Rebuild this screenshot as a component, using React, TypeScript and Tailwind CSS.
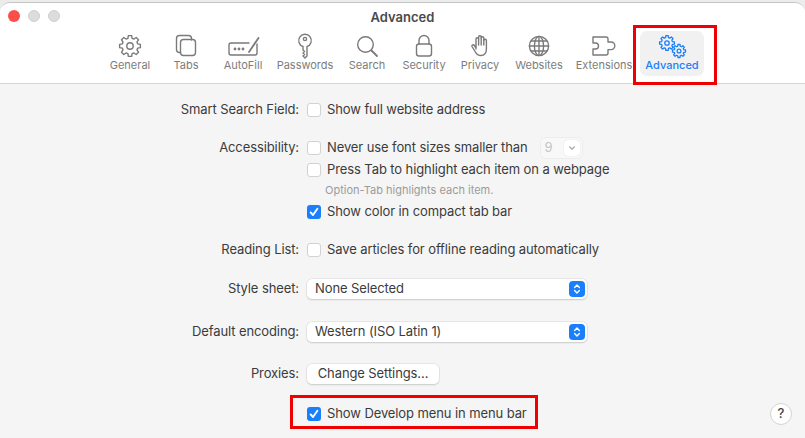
import React from "react";

const GRAY = "#7a7a7a";
const BLUE = "#1a7ffb";

function gearPath(cx: number, cy: number, rOut: number, rIn: number, teeth: number) {
  const pts: string[] = [];
  const step = (Math.PI * 2) / teeth;
  for (let i = 0; i < teeth; i++) {
    const a = i * step - Math.PI / 2;
    const list: [number, number][] = [
      [rIn, a - step * 0.34],
      [rOut, a - step * 0.2],
      [rOut, a + step * 0.2],
      [rIn, a + step * 0.34],
    ];
    list.forEach(([r, t]) => {
      pts.push(`${(cx + r * Math.cos(t)).toFixed(2)} ${(cy + r * Math.sin(t)).toFixed(2)}`);
    });
  }
  return "M" + pts.join("L") + "Z";
}

function Svg({ children, color = GRAY }: { children: React.ReactNode; color?: string }) {
  return (
    <svg width="36" height="26" viewBox="0 0 36 26" fill="none" stroke={color} strokeWidth="1.4" strokeLinecap="round" strokeLinejoin="round">
      {children}
    </svg>
  );
}

const icons: Record<string, React.ReactNode> = {
  General: (
    <Svg>
      <path d={gearPath(18, 13, 10.5, 8, 8)} />
      <circle cx="18" cy="13" r="3.2" />
    </Svg>
  ),
  Tabs: (
    <Svg>
      <path d="M12.5 19.5 h-1 a3 3 0 0 1 -3 -3 v-11 a3 3 0 0 1 3 -3 h9 a3 3 0 0 1 3 3 v1.5" />
      <rect x="12.5" y="6.5" width="15" height="16" rx="3" />
    </Svg>
  ),
  AutoFill: (
    <Svg>
      <path d="M24 10 H6 a2 2 0 0 0 -2 2 v8 a2 2 0 0 0 2 2 h24 a2 2 0 0 0 2 -2 v-9" />
      <path d="M24 19 L33.5 5" strokeWidth="1.8" />
      <circle cx="10" cy="16" r="0.7" fill={GRAY} />
      <circle cx="14" cy="16" r="0.7" fill={GRAY} />
      <circle cx="18" cy="16" r="0.7" fill={GRAY} />
    </Svg>
  ),
  Passwords: (
    <Svg>
      <path d="M16 13.5 a6.3 6.3 0 1 1 4 0 V23 l-2 2 l-2 -2 l1.5 -1.5 l-1.5 -1.5 l1.5 -1.5 l-1.5 -1.5 Z" />
      <circle cx="18" cy="6" r="1.6" />
    </Svg>
  ),
  Search: (
    <Svg>
      <circle cx="16.5" cy="11.5" r="7.8" />
      <path d="M22.5 17.5 L28 23" strokeWidth="1.8" />
    </Svg>
  ),
  Security: (
    <Svg>
      <rect x="10.5" y="11" width="15" height="12" rx="2.5" />
      <path d="M13 11 V7.5 a5 5 0 0 1 10 0 V11" />
    </Svg>
  ),
  Privacy: (
    <Svg>
      <path d="M14 16 V6 a1.3 1.3 0 0 1 2.6 0 V4 a1.3 1.3 0 0 1 2.6 0 V5 a1.3 1.3 0 0 1 2.6 0 V7.5 a1.3 1.3 0 0 1 2.6 0 V16 c0 4 -2 6.5 -5.5 6.5 c-3 0 -4.5 -1.5 -5.5 -3.5 L10 13.5 c-0.6 -1.5 1.4 -2.5 2.4 -1 L14 15" />
      <path d="M16.6 6 V12 M19.2 5 V12 M21.8 7 V12" />
    </Svg>
  ),
  Websites: (
    <Svg>
      <circle cx="18" cy="13" r="9.6" />
      <ellipse cx="18" cy="13" rx="4.6" ry="9.6" />
      <path d="M18 3.4 V22.6 M8.4 13 H27.6 M10 8 H26 M10 18 H26" />
    </Svg>
  ),
  Extensions: (
    <Svg>
      <path d="M7 4 H20 a2 2 0 0 1 2 2 V9 H25 a3.8 3.8 0 0 1 0 7.6 H22 V20 a2 2 0 0 1 -2 2 H7 V16 H9.5 a3 3 0 0 0 0 -6 H7 Z" />
    </Svg>
  ),
  Advanced: (
    <svg width="36" height="26" viewBox="0 0 36 26" fill="none" stroke={BLUE} strokeWidth="1.3" strokeLinejoin="round">
      <path d={gearPath(13, 10, 7.5, 5.6, 8)} />
      <circle cx="13" cy="10" r="2.2" />
      <path d={gearPath(25, 18, 6.6, 4.9, 8)} />
      <circle cx="25" cy="18" r="1.9" />
    </svg>
  ),
};

const tabs: { name: string; w: string }[] = [
  { name: "General", w: "w-[56px]" },
  { name: "Tabs", w: "w-[56px]" },
  { name: "AutoFill", w: "w-[58px]" },
  { name: "Passwords", w: "w-[66px]" },
  { name: "Search", w: "w-[58px]" },
  { name: "Security", w: "w-[56px]" },
  { name: "Privacy", w: "w-[56px]" },
  { name: "Websites", w: "w-[62px]" },
  { name: "Extensions", w: "w-[68px]" },
];

function Check({ on }: { on?: boolean }) {
  return on ? (
    <span className="flex h-[14px] w-[14px] shrink-0 items-center justify-center rounded-[3px] bg-[#1a7ffb]">
      <svg width="12" height="12" viewBox="0 0 12 12" fill="none" stroke="white" strokeWidth="1.9" strokeLinecap="round" strokeLinejoin="round">
        <path d="M2.6 6.4 L5 9 L9.4 2.8" />
      </svg>
    </span>
  ) : (
    <span className="h-[14px] w-[14px] shrink-0 rounded-[3px] border border-[#d2d2d2] bg-white" />
  );
}

function Row({ label, mt, children }: { label?: string; mt: string; children: React.ReactNode }) {
  return (
    <div className={`flex h-[20px] items-center ${mt}`}>
      <div className="w-[299px] shrink-0 text-right">{label}</div>
      <div className="ml-[8px] flex items-center">{children}</div>
    </div>
  );
}

function CheckRow({ on, text }: { on?: boolean; text: string }) {
  return (
    <>
      <Check on={on} />
      <span className="ml-[6px] whitespace-nowrap">{text}</span>
    </>
  );
}

function Select({ text }: { text: string }) {
  return (
    <div className="flex h-[20px] w-[280px] items-center justify-between rounded-[5px] bg-white pl-[8px] pr-[2px] shadow-[0_0_0_0.5px_#d8d8d8,0_1px_1.5px_#c4c4c4]">
      <span>{text}</span>
      <span className="flex h-[16px] w-[16px] items-center justify-center rounded-[4px] bg-[#1a7ffb]">
        <svg width="10" height="12" viewBox="0 0 10 12" fill="none" stroke="white" strokeWidth="1.4" strokeLinecap="round" strokeLinejoin="round">
          <path d="M2.6 4.4 L5 2 L7.4 4.4 M2.6 7.6 L5 10 L7.4 7.6" />
        </svg>
      </span>
    </div>
  );
}

export default function App() {
  return (
    <div className="relative h-[438px] w-[805px] overflow-hidden bg-[#ececec] font-['Inter','Liberation_Sans',sans-serif] text-[13px] text-[#3b3b3b]">
      <div className="mt-[2px] h-[436px] overflow-hidden rounded-t-[10px] border-t border-[#c4c4c4] bg-[#f5f5f5]">
        <div className="h-[81px] border-b border-[#d6d6d6] bg-white">
          <div className="relative flex h-[28px] items-center justify-center">
            <div className="absolute left-[8px] top-[7px] flex gap-[8px]">
              <span className="h-[12px] w-[12px] rounded-full bg-[#fb4f4b]" />
              <span className="h-[12px] w-[12px] rounded-full border border-[#cfcfcf] bg-[#dcdcdc]" />
              <span className="h-[12px] w-[12px] rounded-full border border-[#cfcfcf] bg-[#dcdcdc]" />
            </div>
            <span className="text-[13px] font-semibold leading-none text-[#4a4a4a]">Advanced</span>
          </div>
          <div className="flex pl-[102px] text-[11px] leading-[14px] text-[#7d7d7d]">
            {tabs.map((t) => (
              <div key={t.name} className={`flex ${t.w} flex-col items-center`}>
                <div className="mt-[2px] h-[26px]">{icons[t.name]}</div>
                <span className="-mt-[1px] whitespace-nowrap">{t.name}</span>
              </div>
            ))}
            <div className="ml-[2px] flex h-[45px] w-[64px] flex-col items-center rounded-[7px] bg-[#f1f1f1] text-[#1a7ffb]">
              <div className="mt-[2px] h-[26px]">{icons.Advanced}</div>
              <span className="-mt-[1px] whitespace-nowrap font-medium">Advanced</span>
            </div>
          </div>
        </div>

        <div className="pt-[16px] tracking-[-0.1px]">
          <Row label="Smart Search Field:" mt="mt-0">
            <CheckRow text="Show full website address" />
          </Row>
          <Row label="Accessibility:" mt="mt-[18px]">
            <CheckRow text="Never use font sizes smaller than" />
            <div className="ml-[13px] flex h-[20px] w-[41px] items-center justify-between rounded-[4px] bg-[#f8f8f8] pl-[4px] pr-[2px] text-[#c4c4c4] shadow-[0_0_0_0.5px_#e6e6e6]">
              <span>9</span>
              <span className="flex h-[16px] w-[16px] items-center justify-center rounded-[4px] bg-white shadow-[0_0_1px_#c8c8c8]">
                <svg width="8" height="6" viewBox="0 0 8 6" fill="none" stroke="#a8a8a8" strokeWidth="1.2" strokeLinecap="round" strokeLinejoin="round">
                  <path d="M1.5 1.8 L4 4.2 L6.5 1.8" />
                </svg>
              </span>
            </div>
          </Row>
          <Row mt="mt-[2px]">
            <CheckRow text="Press Tab to highlight each item on a webpage" />
          </Row>
          <div className="ml-[325px] mt-[1px] flex h-[18px] items-center text-[11px] tracking-normal text-[#9b9b9b]">Option-Tab highlights each item.</div>
          <Row mt="mt-[3px]">
            <CheckRow on text="Show color in compact tab bar" />
          </Row>
          <Row label="Reading List:" mt="mt-[18px]">
            <CheckRow text="Save articles for offline reading automatically" />
          </Row>
          <Row label="Style sheet:" mt="mt-[19px]">
            <Select text="None Selected" />
          </Row>
          <Row label="Default encoding:" mt="mt-[23px]">
            <Select text="Western (ISO Latin 1)" />
          </Row>
          <Row label="Proxies:" mt="mt-[22px]">
            <div className="flex h-[20px] w-[132px] items-center justify-center rounded-[5px] bg-white shadow-[0_0_0_0.5px_#d8d8d8,0_1px_1.5px_#c4c4c4]">Change Settings...</div>
          </Row>
          <Row mt="mt-[20px]">
            <CheckRow on text="Show Develop menu in menu bar" />
          </Row>
        </div>
      </div>

      <div className="absolute left-[770px] top-[403px] flex h-[22px] w-[22px] items-center justify-center rounded-full border border-[#d4d4d4] bg-white text-[13px] font-medium text-[#444]">?</div>
      <div className="absolute left-[633px] top-[25px] h-[60px] w-[84px] border-[3px] border-[#f00000]" />
      <div className="absolute left-[290px] top-[395px] h-[34px] w-[248px] border-[3px] border-[#f00000]" />
    </div>
  );
}
